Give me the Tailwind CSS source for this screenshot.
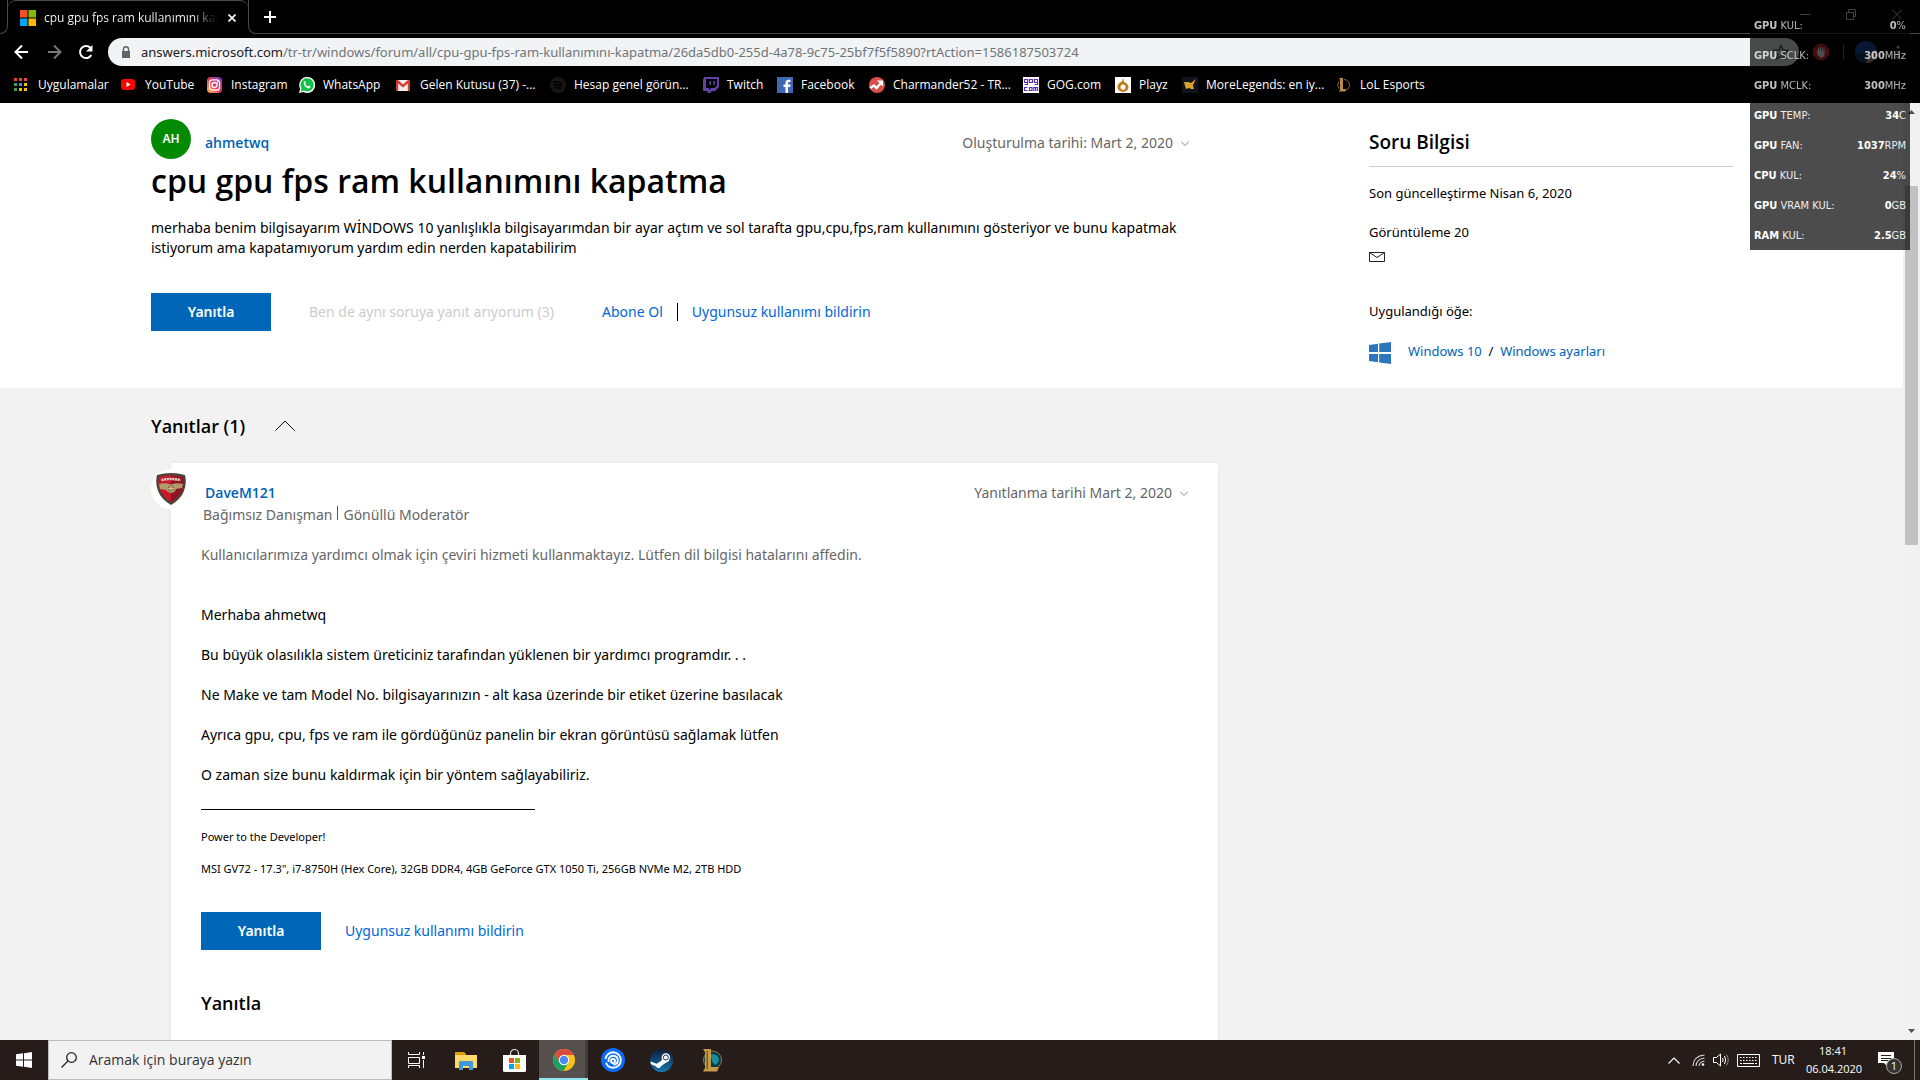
<!DOCTYPE html>
<html lang="tr">
<head>
<meta charset="utf-8">
<title>cpu gpu fps ram kullanımını kapatma</title>
<script src="https://cdn.jsdelivr.net/npm/@tailwindcss/browser@4"></script>
</head>
<body class="relative flex h-screen flex-col overflow-hidden bg-black font-['Open_Sans','Noto_Sans',sans-serif] text-sm text-black">

<!-- Browser chrome -->
<header class="shrink-0 bg-black text-white">
  <div class="flex h-[34px] items-end">
    <div class="h-[34px] w-2 shrink-0 rounded-br-lg border-r border-b border-[#4a4a4a]"></div>
    <div class="flex h-[34px] w-60 shrink-0 items-center rounded-t-lg border-t border-[#4a4a4a] pl-3">
      <svg class="h-4 w-4 shrink-0" viewBox="0 0 16 16"><path fill="#f25022" d="M0 0h7.500v7.500H0z"/><path fill="#7fba00" d="M8.500 0H16v7.500H8.500z"/><path fill="#00a4ef" d="M0 8.500h7.500V16H0z"/><path fill="#ffb900" d="M8.500 8.500H16V16H8.500z"/></svg>
      <span class="ml-2 w-[176px] overflow-hidden bg-linear-to-r from-white from-85% to-black bg-clip-text text-xs whitespace-nowrap text-transparent">cpu gpu fps ram kullanımını kapatma</span>
      <button class="ml-2 shrink-0" aria-label="Sekmeyi kapat"><svg class="h-2 w-2" viewBox="0 0 8 8" stroke="#fff" stroke-width="1.600"><path d="M.5.500l7 7M7.500.500l-7 7"/></svg></button>
    </div>
    <div class="flex h-[34px] flex-1 rounded-bl-lg border-b border-l border-[#4a4a4a] pl-[15px]">
      <button aria-label="Yeni sekme"><svg class="h-3 w-3" viewBox="0 0 12 12" stroke="#fff" stroke-width="2"><path d="M6 0v12M0 6h12"/></svg></button>
      <div class="ml-auto flex items-start gap-9 pt-2 pr-[18px]">
        <button aria-label="Küçült"><svg class="h-[12px] w-[10px]" viewBox="0 0 10 12" stroke="#ddd"><path d="M0 6.500h10"/></svg></button>
        <button aria-label="Geri yükle"><svg class="h-[12px] w-[10px]" viewBox="0 0 10 12" fill="none" stroke="#ddd"><path d="M.5 4.500h7v7h-7zM2.500 4V1.500h7v7H8"/></svg></button>
        <button aria-label="Kapat"><svg class="h-[12px] w-[10px]" viewBox="0 0 10 12" stroke="#ddd"><path d="M0 1.500l10 10M10 1.500l-10 10"/></svg></button>
      </div>
    </div>
  </div>
  <div class="flex h-9 items-center pl-3">
    <button class="w-8" aria-label="Geri"><svg class="h-5 w-5" viewBox="0 0 20 20" fill="none" stroke="#fff" stroke-width="2"><path d="M16 10H3.500M10 3.500L3.500 10l6.500 6.500"/></svg></button>
    <button class="w-8" aria-label="İleri"><svg class="h-5 w-5" viewBox="0 0 20 20" fill="none" stroke="#777" stroke-width="2"><path d="M4 10h12.500M10 3.500l6.500 6.500-6.500 6.500"/></svg></button>
    <button class="w-8" aria-label="Yenile"><svg class="h-5 w-5" viewBox="0 0 20 20" fill="none" stroke="#fff" stroke-width="2"><path d="M15.300 13a6 6 0 1 1-1-7.200"/><path fill="#fff" stroke="none" d="M16.500 3v6.500H10z"/></svg></button>
    <div class="flex h-7 flex-1 items-center rounded-full bg-[#f1f3f4] pr-[10px] pl-3 font-['Noto_Sans',sans-serif] text-[13px]">
      <svg class="h-3 w-3 shrink-0" viewBox="0 0 12 12" fill="#5f6368"><path d="M2 5h8v7H2z"/><path fill="none" stroke="#5f6368" stroke-width="1.400" d="M3.500 5V3.200a2.500 2.500 0 0 1 5 0V5"/></svg>
      <label for="url" class="ml-[9px] text-[#202124]">answers.microsoft.com</label>
      <input id="url" class="min-w-0 flex-1 bg-transparent text-[#70757a] outline-none" value="/tr-tr/windows/forum/all/cpu-gpu-fps-ram-kullanımını-kapatma/26da5db0-255d-4a78-9c75-25bf7f5f5890?rtAction=1586187503724">
      <svg class="h-4 w-4" viewBox="0 0 16 16" fill="none" stroke="#5f6368" stroke-width="1.500"><path d="M8 1.500l2 4.600 5 .4-3.800 3.300 1.200 4.900L8 12.100l-4.400 2.600 1.200-4.900L1 6.500l5-.4z"/></svg>
    </div>
    <svg class="ml-[14px] h-4 w-4" viewBox="0 0 16 16"><path fill="#e0282e" d="M4.700 0h6.600L16 4.700v6.600L11.300 16H4.700L0 11.300V4.700z"/><path fill="#fff" d="M4 6.500h1V4h1.200v3h.6V3H8v4h.6V3.500h1.200v4h.6V5h1.200v5c0 2-1.200 3.500-3 3.500S4.500 12 4 9z"/></svg>
    <div class="ml-[14px] h-4 w-px bg-[#777]"></div>
    <svg class="ml-[11px] h-[22px] w-[22px]" viewBox="0 0 22 22"><circle cx="11" cy="11" r="11" fill="#1c4fa8"/><path fill="#163a66" d="M0 12h22a11 11 0 0 1-22 0z"/><path fill="#c9a184" d="M22 9c-5 1-8 6-11 13 7 0 11-6 11-13z"/></svg>
    <svg class="mr-5 ml-[19px] h-4 w-1" viewBox="0 0 4 16" fill="#ccc"><circle cx="2" cy="3" r="1.500"/><circle cx="2" cy="8" r="1.500"/><circle cx="2" cy="13" r="1.500"/></svg>
  </div>
  <nav class="flex h-[33px] items-center pb-1 pl-[14px] text-xs whitespace-nowrap [&_a]:flex [&_a]:shrink-0 [&_a]:items-center [&_a]:gap-2 [&_svg]:h-4 [&_svg]:w-4 [&_svg]:shrink-0">
    <a href="#" class="w-[107px]"><svg viewBox="0 0 16 16"><path fill="#ea4335" d="M0 1h3v3H0zM5 1h3v3H5zM10 1h3v3h-3z"/><path fill="#34a853" d="M0 6h3v3H0zM0 11h3v3H0z"/><path fill="#4285f4" d="M5 6h3v3H5z"/><path fill="#fbbc05" d="M10 6h3v3h-3zM5 11h3v3H5zM10 11h3v3h-3z"/></svg>Uygulamalar</a>
    <a href="#" class="w-[86px]"><svg viewBox="0 0 16 16"><rect y="2" width="14" height="11" rx="3" fill="#f00"/><path fill="#fff" d="M5.500 5v5l4-2.500z"/></svg>YouTube</a>
    <a href="#" class="w-[92px]"><svg viewBox="0 0 16 16"><defs><linearGradient id="ig" x1="0" y1="1" x2="1" y2="0"><stop offset="0" stop-color="#fdc04d"/><stop offset=".5" stop-color="#e6355f"/><stop offset="1" stop-color="#6a3fd0"/></linearGradient></defs><rect width="15" height="16" rx="4" fill="url(#ig)"/><g fill="none" stroke="#fff" stroke-width="1.300"><rect x="2.500" y="2.800" width="10" height="10.400" rx="3"/><circle cx="7.500" cy="8" r="2.500"/></g><circle cx="10.600" cy="5" r=".8" fill="#fff"/></svg>Instagram</a>
    <a href="#" class="w-[97px]"><svg viewBox="0 0 16 16"><path fill="#fff" d="M0 16l1.200-4.200A8 8 0 1 1 4.400 15z"/><path fill="#12c04a" d="M1.600 14.400l.9-3.100a6.600 6.600 0 1 1 2.400 2.300z"/><path fill="#fff" d="M5 4.500c.6-.6 1.200-.4 1.400.2l.5 1.200-.7 1c.6 1.200 1.500 2 2.700 2.500l.9-1 1.700.8c.2 1.500-1 2.200-2 2.200C6.500 11 4 7.500 5 4.500z"/></svg>WhatsApp</a>
    <a href="#" class="w-[154px]"><svg viewBox="0 0 16 16"><path fill="#eee" d="M1 3h12v11H1z"/><path fill="#d93a30" d="M0 3h2l5 4.500L12 3h2v11h-2.200V6.500L7 10.500 2.200 6.500V14H0z"/></svg>Gelen Kutusu (37) -...</a>
    <a href="#" class="w-[153px]"><svg viewBox="0 0 16 16"><circle cx="8" cy="8" r="8" fill="#191414"/><path fill="none" stroke="#000" stroke-width="1.400" d="M3 5.500q5-1.500 10 1M3.500 8.200q4.500-1.200 8.500.8M4 10.800q4-.8 7 .8"/></svg>Hesap genel görün...</a>
    <a href="#" class="w-[74px]"><svg viewBox="0 0 16 16"><path fill="#6441a4" fill-rule="evenodd" d="M1 0h15v10l-4 4H9l-2 2H4.500v-2H0V3zM3 2v9h3v2l2-2h3.500L14 8.500V2z"/><path fill="#6441a4" d="M6.500 4H8v4H6.500zM10.500 4H12v4h-1.500z"/></svg>Twitch</a>
    <a href="#" class="w-[92px]"><svg viewBox="0 0 16 16"><path fill="#4267b2" d="M0 0h16v16H0z"/><path fill="#fff" d="M8.500 16v-6H6.500V7.500h2V6c0-2.200 1.200-3.300 3.200-3.300h1.800V5h-1.200c-.9 0-1.300.4-1.300 1.200v1.300h2.500L13.200 10H11v6z"/></svg>Facebook</a>
    <a href="#" class="w-[154px]"><svg viewBox="0 0 16 16"><circle cx="8" cy="8" r="8" fill="#d94f4b"/><path fill="none" stroke="#fff" stroke-width="2.400" d="M1 11l4-2.500L7.500 11l4.500-5"/><path fill="#fff" d="M8 3.500h6v6z"/></svg>Charmander52 - TR...</a>
    <a href="#" class="w-[92px]"><svg viewBox="0 0 16 16"><path fill="#fff" d="M0 0h16v16H0z"/><path fill="none" stroke="#5b2db0" stroke-width="1.200" d="M4.500 5.500h-3v-3h3v5h-3M6.500 2.500h3v3h-3zM14.500 5.500h-3v-3h3v5h-3M4.500 10.500h-3v3h3M6.500 10.500h2.500v3H6.500zM10.800 14v-3.500h3.700V14M12.600 10.500V14"/></svg>GOG.com</a>
    <a href="#" class="w-[67px]"><svg viewBox="0 0 16 16"><path fill="#fff" d="M0 0h16v16H0z"/><path fill="#c07a1a" fill-rule="evenodd" d="M8 1c1 2 0 3 2 4.500 2 1 3.500 2.500 3.500 4.500a5.500 5 0 0 1-11 0c0-2.500 1.500-4 3.500-5C7.500 4 7.500 2.500 8 1zM8 7.500a2.600 2.600 0 1 0 .1 0z"/></svg>Playz</a>
    <a href="#" class="w-[154px]"><svg viewBox="0 0 16 16"><path fill="#10131c" d="M0 0h16v16H0z"/><path fill="#d9a22c" d="M2 5h4l3 1 5-4-3 6 1 4H9l-2-1-3 1-1-3z"/></svg>MoreLegends: en iy...</a>
    <a href="#"><svg viewBox="0 0 16 16"><path fill="none" stroke="#8a6a33" d="M8 2.500a5.500 5.500 0 0 1 0 11M3 4.500a5.500 5.500 0 0 0 0 7"/><path fill="#b98b45" d="M3 1h4v11h3l-1 2.500H3l1-1.500V2.500z"/></svg>LoL Esports</a>
  </nav>
</header>

<!-- Page -->
<div class="flex min-h-0 flex-1 bg-[#f2f2f2]">
  <main class="min-w-0 flex-1 overflow-hidden">
    <section class="grid h-[285px] grid-cols-[151fr_1067fr_151fr_364fr_170fr] bg-white">
      <article class="col-start-2 pt-4 font-['Noto_Sans',sans-serif]">
        <div class="flex h-10 items-center">
          <div class="flex h-10 w-10 items-center justify-center rounded-full bg-[#038a03] text-xs font-semibold text-white">AH</div>
          <a href="#" class="mt-2 ml-[14px] font-['Open_Sans',sans-serif] font-semibold text-[#0062b8]">ahmetwq</a>
          <button class="mt-2 mr-[29px] ml-auto flex items-center gap-2 text-[#666]">Oluşturulma tarihi: Mart 2, 2020<svg class="h-2 w-2" viewBox="0 0 8 8" fill="none" stroke="#888"><path d="M0 2.500l4 4 4-4"/></svg></button>
        </div>
        <h1 class="font-['Open_Sans',sans-serif] text-[32px] leading-[44px] font-semibold">cpu gpu fps ram kullanımını kapatma</h1>
        <p class="mt-[15px] leading-5">merhaba benim bilgisayarım WİNDOWS 10 yanlışlıkla bilgisayarımdan bir ayar açtım ve sol tarafta gpu,cpu,fps,ram kullanımını gösteriyor ve bunu kapatmak<br>istiyorum ama kapatamıyorum yardım edin nerden kapatabilirim</p>
        <div class="mt-[35px] flex items-center">
          <button class="h-[38px] w-[120px] bg-[#0067b8] font-semibold text-white">Yanıtla</button>
          <span class="ml-[38px] w-[293px] text-[#ccc]">Ben de aynı soruya yanıt arıyorum (3)</span>
          <a href="#" class="text-[#0067d6]">Abone Ol</a>
          <span class="mx-[14px] h-[18px] w-px bg-black"></span>
          <a href="#" class="text-[#0067d6]">Uygunsuz kullanımı bildirin</a>
        </div>
      </article>
      <aside class="col-start-4 pt-[26px] font-['Noto_Sans',sans-serif] text-[13px] leading-5">
        <h2 class="border-b border-[#ccc] pb-[10px] font-['Open_Sans',sans-serif] text-[19px] leading-[27px] font-semibold">Soru Bilgisi</h2>
        <p class="mt-4">Son güncelleştirme Nisan 6, 2020</p>
        <p class="mt-[19px]">Görüntüleme 20</p>
        <svg class="mt-[10px] h-[10px] w-4" viewBox="0 0 16 10" fill="none" stroke="#222"><path d="M.5.500h15v9H.5zM.5.500L8 5.500l7.500-5"/></svg>
        <p class="mt-[39px]">Uygulandığı öğe:</p>
        <div class="mt-5 flex items-center gap-4">
          <svg class="h-[22px] w-[23px]" viewBox="0 0 23 22" fill="#2e76bc"><path d="M0 3l9-1.300V10H0zM10.200 1.500L22 0v10H10.200zM0 12h9v8.300L0 19zM10.200 12H22v10l-11.800-1.500z"/></svg>
          <p class="pb-1"><a href="#" class="text-[#0062b8]">Windows 10</a> &nbsp;/&nbsp; <a href="#" class="text-[#0062b8]">Windows ayarları</a></p>
        </div>
      </aside>
    </section>

    <section class="grid grid-cols-[151fr_1067fr_151fr_364fr_170fr]">
      <div class="col-start-2">
        <div class="flex h-[75px] items-center gap-[30px]">
          <h2 class="text-lg font-semibold">Yanıtlar (1)</h2>
          <button aria-label="Yanıtları daralt"><svg class="h-[11px] w-5" viewBox="0 0 20 11" fill="none" stroke="#111"><path d="M.5 10.500L10 1l9.500 9.500"/></svg></button>
        </div>
        <article class="relative ml-5 h-[640px] bg-white pt-5 pl-[30px] font-['Noto_Sans',sans-serif] shadow-[0_0_4px_rgba(0,0,0,0.06)]">
          <div class="absolute top-[6px] -left-5 flex h-10 w-10 items-center justify-center rounded-full bg-white">
            <svg class="h-8 w-[30px]" viewBox="0 0 30 32"><path fill="#4a4538" d="M1 2q14-4 28 0 2 8-1 16-3 8-13 14Q5 26 2 18-1 10 1 2z"/><path fill="#c8182a" d="M3 4q12-3.500 24 0 1.500 7-1 13-3 7-11 12Q7 24 4 17 1.500 11 3 4z"/><path fill="#8d1422" d="M15 3q6 0 12 1 1.500 7-1 13-3 7-11 12z"/><path fill="#b3202c" d="M5 5.500q10-2 20 0v3q-10-2-20 0z"/><path fill="none" stroke="#e6dccb" stroke-width="2.500" stroke-dasharray="2 .7" d="M5.500 7q9.500-2 19 0"/><path fill="#b29a6b" d="M3 11q6-1.500 12 .5 6-2 12-.5l-1 4-6 1q-1 4-5 4-3 0-5-3l-6-1z"/><circle cx="15" cy="15.500" r="3.200" fill="#7b6641"/><path stroke="#d8c69a" stroke-width=".8" d="M15 12.300v6.400M11.800 15.500h6.400M12.700 13.200l4.600 4.600M17.300 13.200l-4.600 4.600"/></svg>
          </div>
          <div class="flex h-5 items-center justify-between pr-[30px] pl-1">
            <a href="#" class="font-['Open_Sans',sans-serif] font-semibold text-[#0062b8]">DaveM121</a>
            <button class="flex items-center gap-2 text-[#666]">Yanıtlanma tarihi Mart 2, 2020<svg class="h-2 w-2" viewBox="0 0 8 8" fill="none" stroke="#888"><path d="M0 2.500l4 4 4-4"/></svg></button>
          </div>
          <p class="mt-[2px] flex h-5 items-center gap-[5px] pl-[2px] text-[#666]">Bağımsız Danışman<span class="mb-1 h-[14px] w-px bg-[#555]"></span>Gönüllü Moderatör</p>
          <p class="mt-5 leading-5 text-[#666]">Kullanıcılarımıza yardımcı olmak için çeviri hizmeti kullanmaktayız. Lütfen dil bilgisi hatalarını affedin.</p>
          <div class="mt-10 space-y-5 leading-5">
            <p>Merhaba ahmetwq</p>
            <p>Bu büyük olasılıkla sistem üreticiniz tarafından yüklenen bir yardımcı programdır. . .</p>
            <p>Ne Make ve tam Model No. bilgisayarınızın - alt kasa üzerinde bir etiket üzerine basılacak</p>
            <p>Ayrıca gpu, cpu, fps ve ram ile gördüğünüz panelin bir ekran görüntüsü sağlamak lütfen</p>
            <p>O zaman size bunu kaldırmak için bir yöntem sağlayabiliriz.</p>
          </div>
          <hr class="mt-6 w-[334px] border-black">
          <p class="mt-[17px] text-[11px] leading-5">Power to the Developer!</p>
          <p class="mt-3 text-[11px] leading-5">MSI GV72 - 17.3", i7-8750H (Hex Core), 32GB DDR4, 4GB GeForce GTX 1050 Ti, 256GB NVMe M2, 2TB HDD</p>
          <div class="mt-[33px] flex items-center gap-6">
            <button class="h-[38px] w-[120px] bg-[#0067b8] font-semibold text-white">Yanıtla</button>
            <a href="#" class="text-[#0067d6]">Uygunsuz kullanımı bildirin</a>
          </div>
          <h2 class="mt-10 font-['Open_Sans',sans-serif] text-lg leading-[27px] font-semibold">Yanıtla</h2>
        </article>
      </div>
    </section>
  </main>
  <div class="flex w-[17px] shrink-0 flex-col items-center bg-[#f1f1f1] py-[7px]" aria-hidden="true">
    <svg class="h-1 w-[7px]" viewBox="0 0 7 4" fill="#505050"><path d="M0 4l3.500-4L7 4z"/></svg>
    <div class="mt-[72px] h-[359px] w-[13px] shrink-0 bg-[#c1c1c1]"></div>
    <svg class="mt-auto h-1 w-[7px]" viewBox="0 0 7 4" fill="#505050"><path d="M0 0l3.500 4L7 0z"/></svg>
  </div>
</div>

<!-- Taskbar -->
<footer class="flex h-10 shrink-0 items-stretch bg-[#261d1a] text-white">
  <button class="flex w-12 items-center justify-center" aria-label="Başlat"><svg class="h-4 w-4" viewBox="0 0 16 16" fill="#fff"><path d="M0 2.300L7 1.300v6.200H0zM8 1.200L16 0v7.500H8zM0 8.500h7v6.200l-7-1zM8 8.500h8V16l-8-1.200z"/></svg></button>
  <label class="flex w-[344px] items-center gap-3 border border-[#bbb] bg-[#f2f2f2] pl-3">
    <svg class="h-4 w-4 shrink-0" viewBox="0 0 16 16" fill="none" stroke="#222" stroke-width="1.300"><circle cx="10.500" cy="5.500" r="4.800"/><path d="M7 9L.5 15.500"/></svg>
    <input class="w-full bg-transparent text-sm outline-none placeholder:text-[#333]" placeholder="Aramak için buraya yazın" aria-label="Ara">
  </label>
  <div class="flex [&_button]:flex [&_button]:w-[49px] [&_button]:items-center [&_button]:justify-center">
    <button aria-label="Görev Görünümü"><svg class="h-4 w-[17px]" viewBox="0 0 17 16" fill="none" stroke="#fff"><path d="M.5 0v2.500h11V0M.5 5.500h11v6H.5zM.5 16v-2.500h11V16M15.500 0v3M15.500 8v8"/><path fill="#fff" stroke="none" d="M14 4h3v3h-3z"/></svg></button>
    <button aria-label="Dosya Gezgini"><svg class="h-[19px] w-[22px]" viewBox="0 0 22 19"><path fill="#e0a100" d="M0 1h9l2 2v3H0z"/><path fill="#ffda6b" d="M0 4h22v13H0z"/><path fill="#3f97dc" d="M4 19v-8q0-1 1-1h12q1 0 1 1v8h-4v-4H8v4z"/></svg></button>
    <button aria-label="Microsoft Store"><svg class="h-[23px] w-[23px]" viewBox="0 0 23 23"><path fill="none" stroke="#ddd" stroke-width="1.200" d="M7.500 6V4.500a4 4 0 0 1 8 0V6"/><path fill="#fff" d="M0 6h23v15.500q0 1.500-1.500 1.500h-20Q0 23 0 21.500z"/><path fill="#f25022" d="M6 9h5v5H6z"/><path fill="#7fba00" d="M12 9h5v5h-5z"/><path fill="#00a4ef" d="M6 15h5v5H6z"/><path fill="#ffb900" d="M12 15h5v5h-5z"/></svg></button>
    <button class="border-b-2 border-b-[#8fe6f0] bg-[#554f4d] pt-[2px] shadow-[inset_-3px_0_0_#3c4040]" aria-label="Google Chrome"><svg class="h-[22px] w-[22px]" viewBox="0 0 22 22"><circle cx="11" cy="11" r="11" fill="#fbc116"/><path fill="#dd4b3e" d="M1.500 5.500A11 11 0 0 1 20.500 5.500L20.700 6H11l-4.500 7.500z"/><path fill="#1da25f" d="M1.500 5.500A11 11 0 0 0 10.500 22l4.800-8.500H6.700z"/><circle cx="11" cy="11" r="5.200" fill="#fff"/><circle cx="11" cy="11" r="4.200" fill="#4a8af4"/></svg></button>
    <button aria-label="Ubisoft Connect"><svg class="h-6 w-6" viewBox="0 0 24 24"><circle cx="12" cy="12" r="12" fill="#0a6cf5"/><g fill="none" stroke="#fff" stroke-width="1.900"><path d="M4.500 11C5 7 8.500 4.200 12 4.200a8 8 0 0 1 7.800 8c0 4.300-3.500 7.600-7.800 7.600-3.500 0-6-2-7-5"/><path d="M7.500 14c-.5-3.500 1.500-6.300 4.700-6.300 2.800 0 4.600 2 4.600 4.600S15 16.800 12.300 16.800"/><circle cx="12" cy="13" r="2"/></g></svg></button>
    <button aria-label="Steam"><svg class="h-[23px] w-[23px]" viewBox="0 0 23 23"><defs><linearGradient id="st" x1="0" y1="0" x2="0" y2="1"><stop offset="0" stop-color="#101c3a"/><stop offset="1" stop-color="#1576ae"/></linearGradient></defs><circle cx="11.500" cy="11.500" r="11.500" fill="url(#st)"/><path fill="#fff" d="M.5 12.500l6.200 2.300 4.300-2.800 3-5 5 5-5 3-3 2.200c-.5 2-3.600 2.600-4.800.3L.8 15z"/><circle cx="15.800" cy="8.500" r="4.200" fill="#fff"/><circle cx="15.800" cy="8.500" r="2.500" fill="none" stroke="#1a3158" stroke-width="1"/></svg></button>
    <button aria-label="League of Legends"><svg class="h-6 w-6" viewBox="0 0 24 24"><circle cx="13.500" cy="12" r="9" fill="#0b3c46" stroke="#9c7a3c"/><path fill="#17909a" d="M12 6q8 0 8 6-1 4-4 5-4-3-4-11z"/><path fill="#c99a46" d="M4 1h8v18h8l-2 4.500H4L6 20V4z"/><path fill="#7c5a22" d="M7.500 3H9v18H7.500z"/></svg></button>
  </div>
  <div class="ml-auto flex items-center text-xs">
    <svg class="h-[7px] w-3" viewBox="0 0 12 7" fill="none" stroke="#fff" stroke-width="1.200"><path d="M.5 6.500L6 1l5.500 5.500"/></svg>
    <svg class="ml-3 h-3 w-[13px]" viewBox="0 0 13 12" fill="none" stroke="#ddd" stroke-width="1.100"><path d="M1 12Q1.500 2 12.500 1M4 12Q4.500 5 12.500 4M7 12Q7.500 8 12.500 7"/><circle cx="11" cy="10.500" r="1.300" fill="#fff" stroke="none"/></svg>
    <svg class="ml-2 h-[14px] w-4" viewBox="0 0 16 14" fill="none" stroke="#fff"><path d="M.5 4.500h3l4-3.500v12l-4-3.500h-3zM9.500 5q1.300 2 0 4M11.500 3q2.500 4 0 8"/><path stroke="#888" d="M13.500 1.500q3.500 5.500 0 11"/></svg>
    <svg class="ml-2 h-[13px] w-[23px]" viewBox="0 0 23 13" fill="none" stroke="#fff"><path d="M.5.500h22v12H.5z"/><path stroke-dasharray="1.500 1.500" d="M3 3.500h17M3 6.500h17"/><path stroke-dasharray="2 1 11 1 2" d="M3 9.500h17"/></svg>
    <span class="ml-3 w-[34px]">TUR</span>
    <time class="w-[54px] text-center text-[11px] leading-[18px] whitespace-nowrap">18:41<br>06.04.2020</time>
    <div class="relative mr-5 ml-[18px] h-6 w-4">
      <svg class="h-6 w-4" viewBox="0 0 16 24"><path fill="#fff" d="M0 4h16v11h-6v4l-4-4H0z"/><path stroke="#261d1a" d="M3 7.500h10M3 10.500h10M3 12.500h7"/></svg>
      <span class="absolute top-[10px] left-2 flex h-4 w-4 items-center justify-center rounded-full border border-[#aaa] bg-[#333] text-[11px]">1</span>
    </div>
    <div class="mr-[5px] h-10 w-px bg-[#777]"></div>
  </div>
</footer>

<!-- Hardware monitor overlay -->
<div class="pointer-events-none absolute top-0 right-[10px] h-[250px] w-40 bg-black/70 pt-[11px] pr-1 pl-1 font-['DejaVu_Sans_Condensed','DejaVu_Sans',sans-serif] text-[11px] leading-[30px] text-[#eee]">
  <dl class="[&_b]:text-white [&>div]:flex [&>div]:justify-between">
    <div class="opacity-75"><dt><b>GPU</b> KUL:</dt><dd><b>0</b>%</dd></div>
    <div class="opacity-75"><dt><b>GPU</b> SCLK:</dt><dd><b>300</b>MHz</dd></div>
    <div class="opacity-75"><dt><b>GPU</b> MCLK:</dt><dd><b>300</b>MHz</dd></div>
    <div><dt><b>GPU</b> TEMP:</dt><dd><b>34</b>C</dd></div>
    <div><dt><b>GPU</b> FAN:</dt><dd><b>1037</b>RPM</dd></div>
    <div><dt><b>CPU</b> KUL:</dt><dd><b>24</b>%</dd></div>
    <div><dt><b>GPU</b> VRAM KUL:</dt><dd><b>0</b>GB</dd></div>
    <div><dt><b>RAM</b> KUL:</dt><dd><b>2.5</b>GB</dd></div>
  </dl>
</div>
</body>
</html>
